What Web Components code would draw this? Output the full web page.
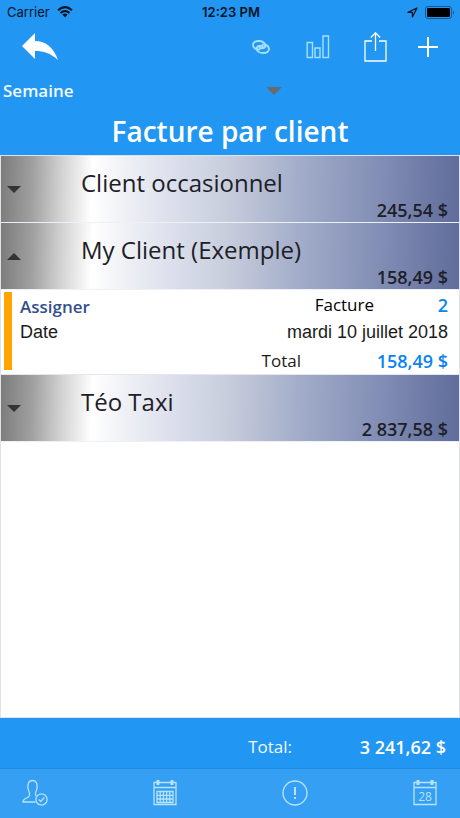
<!DOCTYPE html>
<html lang="fr">
<head>
<meta charset="utf-8">
<meta name="viewport" content="width=device-width, initial-scale=1">
<title>Facture par client</title>
<style>
  body { margin: 0; font-family: "Trebuchet MS", "Open Sans", "Noto Sans", sans-serif; }
</style>
</head>
<body>
<invoice-app></invoice-app>

<template id="status-bar">
  <style>
    :host { display: grid; grid-template-columns: 1fr auto 1fr; align-items: center; height: 24px; padding: 0 5px 0 7px; color: #06131f; font: 13px/24px Inter, "Liberation Sans", sans-serif; }
    .side { display: flex; align-items: center; gap: 7px; }
    .end { justify-content: flex-end; }
    b { font-weight: 600; }
    svg { display: block; }
  </style>
  <span class="side">Carrier
    <svg width="16" height="12" viewBox="0 0 16 12" fill="none" stroke="currentColor" stroke-width="2"><path d="M1 4.3Q8-2 15 4.3M3.5 7Q8 3 12.5 7"/><path d="M5.4 8.6Q8 6.6 10.6 8.6L8 11.4Z" fill="currentColor" stroke="none"/></svg>
  </span>
  <b>12:23 PM</b>
  <span class="side end">
    <svg width="11" height="11" viewBox="0 0 11 11" fill="none" stroke="currentColor" stroke-width="1.2" stroke-linejoin="round"><path d="M10 1L1 5.4H5.4V10Z"/></svg>
    <svg width="30" height="13" viewBox="0 0 30 13"><rect x=".5" y=".5" width="26" height="12" rx="2.5" fill="none" stroke="#155a94"/><rect x="2" y="2" width="23" height="9" rx="1" fill="#000"/><path d="M28 4.5Q30 6.5 28 8.5Z" fill="#124a7a"/></svg>
  </span>
</template>

<template id="tool-bar">
  <style>
    :host { display: flex; align-items: center; justify-content: space-between; height: 46px; padding: 0 12px 0 20px; }
    .actions { display: flex; gap: 17px; }
    button { display: grid; place-items: center; width: 40px; height: 40px; padding: 0; border: 0; background: none; color: #fff; cursor: pointer; }
    .soft { color: #a5e0ff; }
    .actions button:last-child { margin-left: -4px; }
    svg { display: block; }
  </style>
  <button aria-label="Retour"><svg width="36" height="28" viewBox="0 0 36 28" fill="currentColor"><path d="M0 13L13 0V8C24 8 32 15 36 27C28 20 22 18 13 18V26Z"/></svg></button>
  <div class="actions">
    <button class="soft" aria-label="Lier"><svg width="18" height="14" viewBox="0 0 18 14" fill="none" stroke="currentColor" stroke-width="1.9" stroke-linecap="round"><path d="M7.5 9.4C4 9.8 1 7.8 1 5C1 2.500 3.300 1 6.500 1C10.500 1 13.300 3 13.300 5.600C13.300 8 10.500 8.800 8.300 7.800C7.300 7.300 6.800 6.800 6.500 6.200"/><path d="M10.500 4.600C14 4.200 17 6.200 17 9C17 11.500 14.700 13 11.500 13C7.500 13 4.700 11 4.700 8.400C4.700 6 7.500 5.200 9.700 6.200C10.700 6.700 11.200 7.200 11.500 7.800"/></svg></button>
    <button class="soft" aria-label="Statistiques"><svg width="24" height="24" viewBox="0 0 24 24" fill="none" stroke="currentColor" stroke-width="1.4"><path d="M1.200 7.500H6.500V22.500H1.200ZM9 13H14V22.500H9ZM17 1H22.500V22.500H17Z"/></svg></button>
    <button aria-label="Partager"><svg width="23" height="30" viewBox="0 0 23 30" fill="none" stroke="currentColor" stroke-width="1.3"><path d="M8 9H1V29H22V9H15M11.500 19V1M6.800 5.500L11.500.8L16.200 5.500"/></svg></button>
    <button aria-label="Ajouter"><svg width="20" height="20" viewBox="0 0 20 20" fill="none" stroke="currentColor" stroke-width="2"><path d="M10 0V20M0 10H20"/></svg></button>
  </div>
</template>

<template id="period-picker">
  <style>
    :host { display: block; padding: 8px 0 0 3px; }
    label { display: flex; align-items: center; width: 61%; }
    select { flex: 1; height: 26px; margin: 0 -16px 0 0; padding: 0; border: 0; background: none; appearance: none; color: #f2fbff; font: 600 17px/26px "Trebuchet MS", "Open Sans", sans-serif; }
    option { color: #222; }
    svg { display: block; pointer-events: none; }
  </style>
  <label>
    <select aria-label="Période"><option>Semaine</option><option>Mois</option><option>Année</option></select>
    <svg width="16" height="8" viewBox="0 0 16 8"><path d="M0 0H16L8 8Z" fill="#666b70"/></svg>
  </label>
</template>

<template id="client-row">
  <style>
    :host { display: block; border-bottom: 1px solid #eef0f6; }
    button { display: grid; grid-template-columns: 74px 1fr; grid-template-rows: 44px 22px; width: 100%; padding: 0 11px 0 6px; border: 0; text-align: left; font-family: inherit; color: #1d2027; cursor: pointer;
      background: linear-gradient(92deg, #7b7b7b 0%, #a0a0a0 7%, #d0d0d0 13%, #fff 20%, #f0f1f6 27%, #d9ddea 39%, #c7ccdc 50%, #a0abc8 66%, #7f8bb3 84%, #606c9a 100%); }
    svg { grid-row: 1 / 3; align-self: center; display: block; }
    .name { font-size: 24px; line-height: 54px; }
    .amount { font-size: 18px; font-weight: 600; line-height: 20px; text-align: right; }
    :host([open]) svg { transform: rotate(180deg); }
  </style>
  <button><svg width="14" height="7" viewBox="0 0 14 7"><path d="M0 0H14L7 7Z" fill="#333"/></svg><span class="name"><slot></slot></span><span class="amount"></span></button>
</template>

<template id="invoice-detail">
  <style>
    :host { display: flex; gap: 8px; height: 85px; padding: 2px 11px 4px 3px; box-sizing: border-box; border-bottom: 1px solid #e6e7ec; background: #fff; }
    .mark { width: 8px; background: #ffa500; }
    .lines { flex: 1; color: #1b1b1b; font-size: 17px; }
    .line { display: flex; justify-content: space-between; height: 26px; line-height: 26px; }
    .pair { display: flex; text-align: right; }
    .n { width: 74px; }
    .t { width: 147px; }
    b, a { color: #0a84f5; font-weight: 600; text-decoration: none; }
    b { font-size: 18px; }
    .assign { color: #33508c; line-height: 30px; }
    .date { font-size: 18px; line-height: 29px; font-family: "Liberation Sans", Arial, sans-serif; }
    .total { justify-content: flex-end; line-height: 34px; }
    .facture { color: #000; }
  </style>
  <span class="mark"></span>
  <div class="lines">
    <div class="line"><a class="assign" href="#assigner">Assigner</a><span class="pair"><span class="facture">Facture</span><b class="n">2</b></span></div>
    <div class="line date"><span>Date</span><span>mardi 10 juillet 2018</span></div>
    <div class="line total"><span class="pair"><span>Total</span><b class="t">158,49 $</b></span></div>
  </div>
</template>

<template id="total-bar">
  <style>
    :host { display: flex; justify-content: flex-end; height: 50px; padding: 4px 14px 0 0; box-sizing: border-box; background: #2196f3; color: #effaff; font-size: 17px; line-height: 50px; }
    b { width: 154px; text-align: right; font-size: 18px; font-weight: 600; color: #fff; }
  </style>
  <span>Total:</span><b>3 241,62 $</b>
</template>

<template id="tab-bar">
  <style>
    :host { display: block; background: #359ff4; border-top: 1px solid #2389de; }
    nav { display: flex; justify-content: space-between; padding: 10px 22px 9px; }
    a { display: block; color: #b9e3fc; }
    svg { display: block; fill: none; stroke: currentColor; stroke-width: 1.3; }
    text { fill: currentColor; stroke: none; font: 12px "Open Sans", sans-serif; }
  </style>
  <nav>
    <a href="#clients" aria-label="Clients"><svg width="26" height="30" viewBox="0 0 26 30"><path d="M13.500 23H1C1 19 5 19.500 7 17.500C8 16 8 14.500 7 12.500C4.500 7 6 1.500 10.500 1.500C15 1.500 16.500 7 14 12.500C13 14.500 13 15.500 14 17"/><circle cx="19.500" cy="20.500" r="5.600"/><path d="M16.800 20.500L18.800 22.500L22.300 18.500"/></svg></a>
    <a href="#calendrier" aria-label="Calendrier"><svg width="26" height="30" viewBox="0 0 26 30"><path d="M2 3.500H24V25.500H2ZM2 8.500H24M5 12.500H21V23.500H5ZM8.200 12.500V23.500M11.400 12.500V23.500M14.600 12.500V23.500M17.800 12.500V23.500M5 16.300H21M5 20H21"/><path d="M6 1V6M20 1V6" stroke-width="3"/></svg></a>
    <a href="#alertes" aria-label="Alertes"><svg width="26" height="30" viewBox="0 0 26 30"><circle cx="13" cy="14" r="12"/><path d="M13 8V16M13 18V20" stroke-width="2"/></svg></a>
    <a href="#jour" aria-label="Jour"><svg width="26" height="30" viewBox="0 0 26 30"><path d="M2 3.500H24V25.500H2ZM2 8.500H24"/><path d="M6 1V6M20 1V6" stroke-width="3"/><text x="13" y="22" text-anchor="middle">28</text></svg></a>
  </nav>
</template>

<template id="invoice-app">
  <style>
    :host { display: flex; flex-direction: column; min-height: 100vh; background: #2196f3; }
    h1 { margin: 0; padding-top: 3px; color: #fff; font-size: 28px; font-weight: 600; line-height: 48px; text-align: center; }
    main { flex: 1; box-sizing: border-box; border: 1px solid #dfe3e8; background: #fff; }
  </style>
  <status-bar></status-bar>
  <tool-bar></tool-bar>
  <period-picker></period-picker>
  <h1>Facture par client</h1>
  <main>
    <client-row amount="245,54 $">Client occasionnel</client-row>
    <client-row amount="158,49 $" open>My Client (Exemple)</client-row>
    <invoice-detail></invoice-detail>
    <client-row amount="2 837,58 $">Téo Taxi</client-row>
  </main>
  <total-bar></total-bar>
  <tab-bar></tab-bar>
</template>

<script>
  class Base extends HTMLElement {
    constructor() {
      super();
      this.attachShadow({ mode: "open" }).append(document.getElementById(this.localName).content.cloneNode(true));
    }
  }
  class ClientRow extends Base {
    connectedCallback() {
      const button = this.shadowRoot.querySelector("button");
      this.shadowRoot.querySelector(".amount").textContent = this.getAttribute("amount");
      button.setAttribute("aria-expanded", this.hasAttribute("open"));
      button.onclick = () => {
        button.setAttribute("aria-expanded", this.toggleAttribute("open"));
        const next = this.nextElementSibling;
        if (next && next.localName === "invoice-detail") next.style.display = this.hasAttribute("open") ? "" : "none";
      };
    }
  }
  customElements.define("client-row", ClientRow);
  for (const name of ["status-bar", "tool-bar", "period-picker", "invoice-detail", "total-bar", "tab-bar", "invoice-app"]) {
    customElements.define(name, class extends Base {});
  }
</script>
</body>
</html>
